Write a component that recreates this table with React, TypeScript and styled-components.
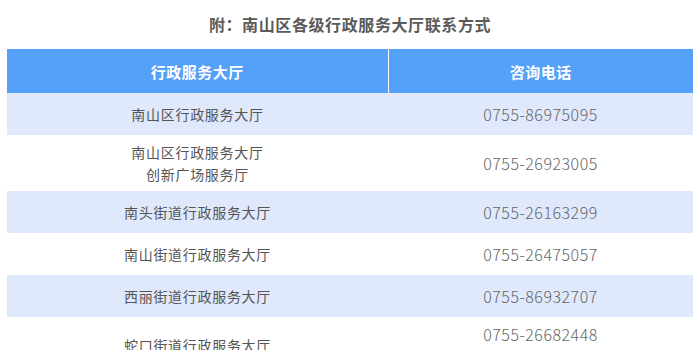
import styled, { createGlobalStyle } from "styled-components";

type Hall = {
  names: string[];
  phones: string[];
};

const halls: Hall[] = [
  { names: ["南山区行政服务大厅"], phones: ["0755-86975095"] },
  { names: ["南山区行政服务大厅", "创新广场服务厅"], phones: ["0755-26923005"] },
  { names: ["南头街道行政服务大厅"], phones: ["0755-26163299"] },
  { names: ["南山街道行政服务大厅"], phones: ["0755-26475057"] },
  { names: ["西丽街道行政服务大厅"], phones: ["0755-86932707"] },
  { names: ["蛇口街道行政服务大厅"], phones: ["0755-26682448", "0755-26682449"] },
];

export default function App() {
  return (
    <Page>
      <GlobalStyle />
      <Title>附：南山区各级行政服务大厅联系方式</Title>
      <Table>
        <colgroup>
          <col style={{ width: 381 }} />
          <col />
        </colgroup>
        <thead>
          <tr>
            <HeadCell>行政服务大厅</HeadCell>
            <HeadCell>咨询电话</HeadCell>
          </tr>
        </thead>
        <tbody>
          {halls.map((hall, i) => (
            <Row key={i} $striped={i % 2 === 0}>
              <NameCell>
                {hall.names.map((n) => (
                  <Line key={n}>{n}</Line>
                ))}
              </NameCell>
              <PhoneCell>
                {hall.phones.map((p) => (
                  <Line key={p}>{p}</Line>
                ))}
              </PhoneCell>
            </Row>
          ))}
        </tbody>
      </Table>
    </Page>
  );
}

const GlobalStyle = createGlobalStyle`
  body {
    margin: 0;
    background: #ffffff;
    font-family: "Noto Sans CJK SC", "Noto Sans", sans-serif;
  }
`;

const Page = styled.div`
  padding: 0 7px;
  overflow: hidden;
  height: 350px;
`;

const Title = styled.h3`
  margin: 12px 0 13px;
  height: 24px;
  line-height: 24px;
  text-align: center;
  font-size: 16px;
  font-weight: 700;
  letter-spacing: 0.6px;
  color: #5a5a5a;
`;

const Table = styled.table`
  width: 100%;
  border-collapse: collapse;
  table-layout: fixed;
`;

const HeadCell = styled.th`
  height: 44px;
  padding: 0;
  background: #55a0f8;
  color: #ffffff;
  font-size: 15px;
  font-weight: 700;
  letter-spacing: 0.5px;
  text-align: center;
  vertical-align: middle;

  & + & {
    border-left: 1px solid #ffffff;
  }
`;

const Row = styled.tr<{ $striped: boolean }>`
  background: ${(p) => (p.$striped ? "#dfe9fb" : "#ffffff")};
`;

const NameCell = styled.td`
  height: 42px;
  box-sizing: border-box;
  padding: 6px 0;
  text-align: center;
  vertical-align: middle;
  font-size: 14px;
  letter-spacing: 0.7px;
  color: #555555;
`;

const PhoneCell = styled(NameCell)`
  font-size: 16px;
  font-weight: 300;
  letter-spacing: 0.5px;
  color: #666666;
`;

const Line = styled.div`
  line-height: 22px;
`;
